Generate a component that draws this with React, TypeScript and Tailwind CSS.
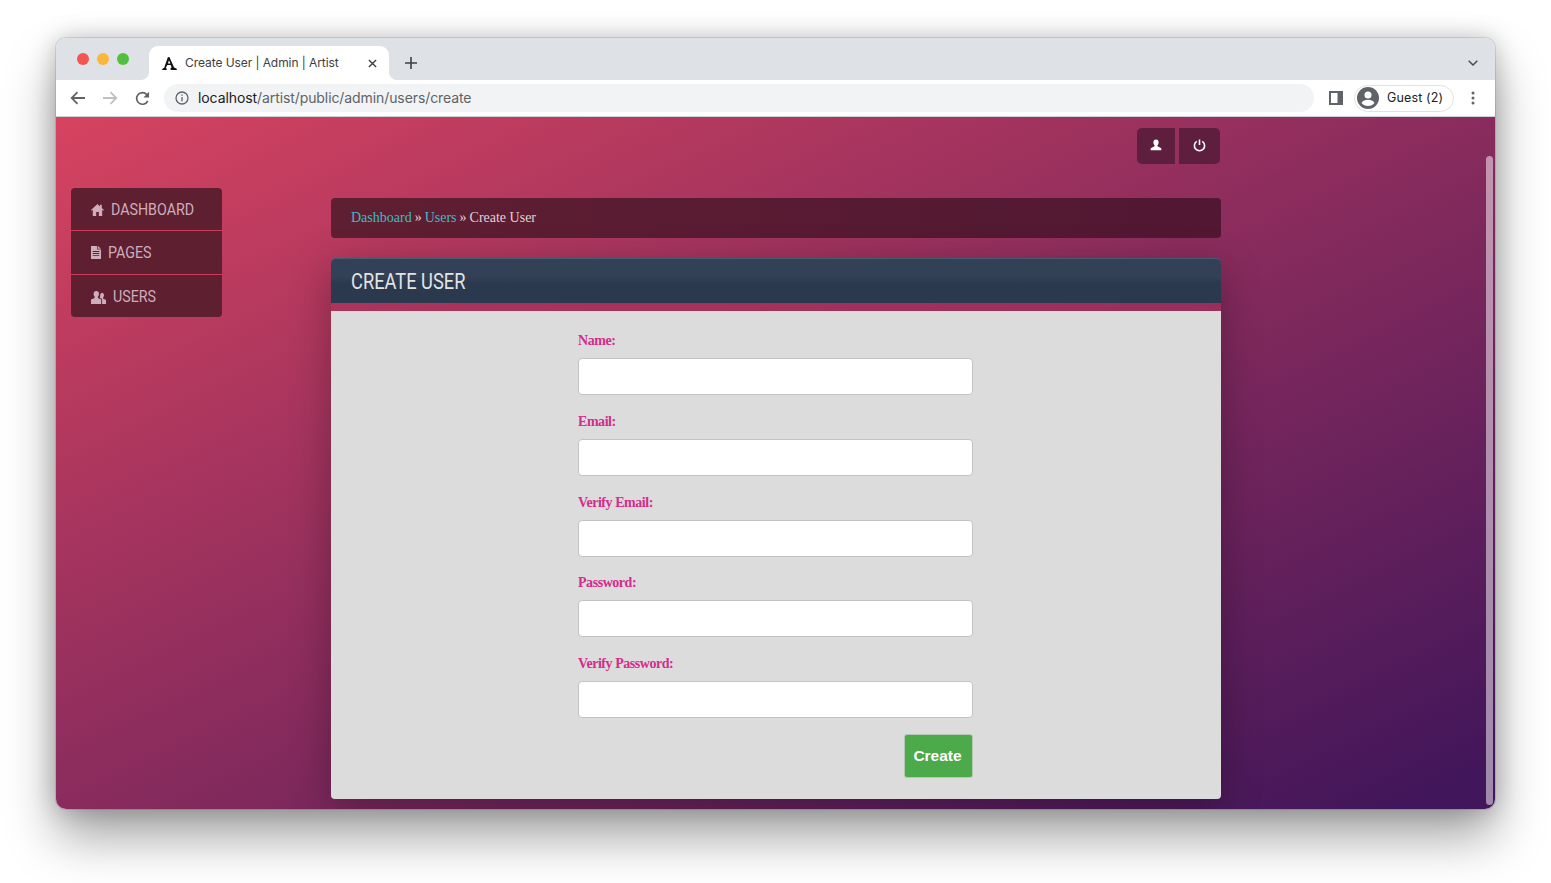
import React from "react";

const Home = ({ c = "" }: { c?: string }) => (
  <svg viewBox="0 0 13 12" className={c} fill="currentColor"><path d="M6.500 0 0 6l.7.8 1.100-1V12h3.400V8h2.600v4h3.400V5.800l1.100 1L13 6l-2.200-2V.7H9V2.400z" /></svg>
);
const FileIcon = ({ c = "" }: { c?: string }) => (
  <svg viewBox="0 0 10 13" className={c} fill="currentColor"><path fillRule="evenodd" d="M0 0h6.200v3.600H10V13H0zM7 .1l2.900 2.700H7zM1.700 5v.9h6.600V5zm0 2.100V8h6.600v-.9zm0 2.100v.9h6.600v-.9z" /></svg>
);
const Users = ({ c = "" }: { c?: string }) => (
  <svg viewBox="0 0 15 13" className={c} fill="currentColor"><path d="M5.300 0c1.700 0 2.700 1.200 2.700 2.900 0 1.100-.4 2.100-1.100 2.800v1.200l3.300 1.700V13H0V8.600l3.600-1.700V5.700C3 5 2.600 4 2.600 2.900 2.600 1.200 3.600 0 5.300 0z" /><path d="M10.700 1.800c1.400 0 2.300 1.100 2.300 2.500 0 1-.4 1.800-1 2.400v.9L15 9v4h-3.900V8l-2.300-1.300c.5-.9.600-2 .4-3.100.3-1 1.300-1.800 2.500-1.800z" /></svg>
);

const navItems = [
  { label: "DASHBOARD", icon: <Home c="w-[13px] h-[12px]" />, cls: "gap-[7px] h-[43px] pt-[2px]" },
  { label: "PAGES", icon: <FileIcon c="w-[10px] h-[13px]" />, cls: "gap-[7px] h-[44px]" },
  { label: "USERS", icon: <Users c="w-[15px] h-[13px]" />, cls: "gap-[7px] h-[42px] pt-[2px]" },
];

const fields = ["Name:", "Email:", "Verify Email:", "Password:", "Verify Password:"];

function Tab() {
  return (
    <div className="relative mt-[8px] ml-[20px] flex h-[34px] w-[240px] items-center rounded-t-[9px] bg-white pl-[13px] pr-[12px]">
      <span className="absolute bottom-0 left-[-8px] h-[8px] w-[8px] bg-[radial-gradient(circle_at_0_0,#dee1e6_7.5px,#ffffff_8.5px)]" />
      <span className="absolute bottom-0 right-[-8px] h-[8px] w-[8px] bg-[radial-gradient(circle_at_100%_0,#dee1e6_7.5px,#ffffff_8.5px)]" />
      <svg viewBox="0 0 15 13" className="mt-[1px] h-[13px] w-[15px]" fill="#111"><path d="M5.800.3 7.400 0l4.700 10.400 2.700 1.300V13H8.900l-.5-1.800 1.200-.7-.9-2.500H5.300l-1.500 2.800.9 1V13H.2v-1.100l2-1.100z" /><path d="M5.900 6.600h2.500L7 3.300z" fill="#fff" /></svg>
      <span className="ml-[8px] flex-1 text-[12px] tracking-[-0.07px] text-[#3c4043]">Create User | Admin | Artist</span>
      <svg viewBox="0 0 10 10" className="h-[9px] w-[9px] text-[#3c4043]" stroke="currentColor" strokeWidth="1.5"><path d="M1 1l8 8M9 1l-8 8" /></svg>
    </div>
  );
}

export default function App() {
  return (
    <div className="h-[883px] w-[1551px] overflow-hidden bg-white pl-[56px] pt-[38px] font-['Inter',sans-serif]">
      <div className="flex h-[771px] w-[1439px] flex-col overflow-hidden rounded-[10px] shadow-[0_28px_50px_rgba(0,0,0,0.36),0_0_24px_rgba(0,0,0,0.22),0_0_0_1px_rgba(0,0,0,0.1)]">
        {/* Tab strip */}
        <div className="flex h-[42px] shrink-0 items-start bg-[#dee1e6]">
          <div className="mt-[15px] ml-[21px] flex gap-[8px]">
            <span className="h-[12px] w-[12px] rounded-full bg-[#f25650]" />
            <span className="h-[12px] w-[12px] rounded-full bg-[#fbb63c]" />
            <span className="h-[12px] w-[12px] rounded-full bg-[#52c03f]" />
          </div>
          <Tab />
          <svg viewBox="0 0 12 12" className="ml-[16px] mt-[19px] h-[12px] w-[12px] text-[#3c4043]" stroke="currentColor" strokeWidth="1.6"><path d="M6 0v12M0 6h12" /></svg>
          <svg viewBox="0 0 10 6" className="ml-auto mr-[17px] mt-[22px] h-[6px] w-[10px] text-[#4a4d51]" fill="none" stroke="currentColor" strokeWidth="1.5"><path d="M.7.8 5 5l4.300-4.200" /></svg>
        </div>
        {/* Toolbar */}
        <div className="flex h-[37px] shrink-0 items-center border-b border-[#d0d2d5] bg-white">
          <svg viewBox="0 0 16 14" className="ml-[14px] h-[14px] w-[16px] text-[#5f6368]" fill="none" stroke="currentColor" strokeWidth="1.8"><path d="M15 7H2M7.500 1.200 1.700 7l5.800 5.800" /></svg>
          <svg viewBox="0 0 16 14" className="ml-[16px] h-[14px] w-[16px] text-[#bdc1c6]" fill="none" stroke="currentColor" strokeWidth="1.8"><path d="M1 7h13M8.500 1.200 14.300 7l-5.800 5.800" /></svg>
          <svg viewBox="0 0 16 16" className="ml-[17px] h-[15px] w-[15px] text-[#5f6368]" fill="none" stroke="currentColor" strokeWidth="1.8"><path d="M13.600 10.500A6.200 6.200 0 1 1 12.400 3.600L14.500 5.700" /><path d="M15 .8v6h-6z" fill="currentColor" stroke="none" /></svg>
          <div className="ml-[14px] flex h-[28px] w-[1150px] items-center rounded-full bg-[#f1f3f4] pl-[11px]">
            <svg viewBox="0 0 14 14" className="h-[14px] w-[14px] text-[#5f6368]" fill="none" stroke="currentColor" strokeWidth="1.300"><circle cx="7" cy="7" r="6" /><path d="M7 6v4.200M7 3.400v1.300" /></svg>
            <span className="ml-[9px] pb-[1px] text-[14px] tracking-[-0.09px] text-[#5f6368]"><span className="text-[#202124]">localhost</span>/artist/public/admin/users/create</span>
          </div>
          <svg viewBox="0 0 14 14" className="ml-[15px] h-[14px] w-[14px]"><path fillRule="evenodd" fill="#5f6368" d="M0 0h14v14H0zM2 2v10h6.500V2z" /></svg>
          <div className="ml-[11px] flex h-[27px] w-[100px] items-center rounded-full border border-[#dfe1e5] pl-[2px]">
            <svg viewBox="0 0 22 22" className="h-[22px] w-[22px]"><circle cx="11" cy="11" r="11" fill="#5f6368" /><circle cx="11" cy="8" r="3.500" fill="#fff" /><path d="M4.500 16c1-2.500 3.800-3.300 6.500-3.300s5.500.8 6.500 3.300c-1.500 2-4 3-6.500 3s-5-1-6.500-3z" fill="#fff" /></svg>
            <span className="ml-[8px] text-[12.5px] tracking-[0.15px] text-[#202124]">Guest (2)</span>
          </div>
          <svg viewBox="0 0 4 14" className="ml-[17px] h-[14px] w-[4px]" fill="#5f6368"><circle cx="2" cy="2" r="1.500" /><circle cx="2" cy="7" r="1.500" /><circle cx="2" cy="12" r="1.500" /></svg>
        </div>
        {/* Page */}
        <div className="relative min-h-0 flex-1 overflow-hidden bg-[linear-gradient(to_bottom_right,#d64360,#41165a_97%)] pl-[15px]">
          <div className="absolute bottom-[4px] right-[2px] top-[39px] w-[7px] rounded-full bg-white/50" />
          <div className="ml-[1066px] mt-[11px] flex w-[83px] gap-[4px] text-white">
            <div className="flex h-[36px] w-[38px] items-center justify-center rounded-l-[5px] bg-[#5e1f3e] pb-[2px]">
              <svg viewBox="0 0 12 12" className="h-[12px] w-[12px]" fill="currentColor"><path d="M6 .5c1.700 0 2.600 1.200 2.600 2.900 0 1.100-.5 2.100-1.100 2.700v1.100l3.800 2v2H.7v-2l3.800-2V6.100c-.6-.6-1.100-1.600-1.100-2.700C3.400 1.700 4.300.5 6 .5z" /></svg>
            </div>
            <div className="flex h-[36px] w-[41px] items-center justify-center rounded-r-[5px] bg-[#5e1f3e] pb-[2px]">
              <svg viewBox="0 0 14 14" className="h-[13px] w-[13px]" fill="none" stroke="currentColor" strokeWidth="1.700"><path d="M4 2.600a5.500 5.500 0 1 0 6 0M7 .5v6" /></svg>
            </div>
          </div>
          <div className="flex items-start">
            <nav className="mt-[24px] w-[151px] shrink-0 overflow-hidden rounded-[4px] bg-[#5e1f30] font-['Roboto',sans-serif] text-[16px] text-[#cfaebb]">
              {navItems.map((n, i) => (
                <div key={n.label} className={`flex items-center pl-[20px] ${n.cls} ${i < 2 ? "border-b border-[#c93c5c]" : ""}`}>
                  {n.icon}
                  <span className="origin-left scale-x-[0.89]">{n.label}</span>
                </div>
              ))}
            </nav>
            <main className="ml-[109px] mt-[34px] w-[890px]">
              <div className="flex h-[40px] items-center rounded-[4px] bg-[linear-gradient(to_right,#5f1f32,#511733)] pb-[1px] pl-[20px] font-['Liberation_Serif',serif] text-[14px] text-[#e0d3d6]">
                <span className="text-[#40bcc4]">Dashboard</span>
                <span className="mx-[3px]">»</span>
                <span className="text-[#40bcc4]">Users</span>
                <span className="mx-[3px]">»</span>
                <span>Create User</span>
              </div>
              <section className="mt-[20px] rounded-[4px] shadow-[0_10px_40px_rgba(0,0,0,0.28)]">
                <h1 className="flex h-[45px] items-center rounded-t-[5px] border-t border-[#465a70] bg-[linear-gradient(to_bottom,#334156_0%,#334156_40%,#2a394d_55%,#2a394d_100%)] pl-[20px] font-['Roboto',sans-serif] text-[22px] font-normal text-[#e3e3e3]">
                  <span className="origin-left scale-x-[0.83]">CREATE USER</span>
                </h1>
                <div className="h-[8px] bg-[#a8325b]/60" />
                <form className="rounded-b-[4px] bg-[#dcdcdc] pl-[247px] pr-[248px] pt-[20px] pb-[21px]">
                  {fields.map((f) => (
                    <div key={f} className="mb-[16.75px]">
                      <label className="block h-[27px] font-['Liberation_Serif',serif] text-[14px] font-bold leading-[19px] tracking-[-0.45px] text-[#d42c8c]">{f}</label>
                      <input className="block h-[37px] w-full rounded-[4px] border border-[#c3c3c3] bg-white" />
                    </div>
                  ))}
                  <div className="-mt-[1px] flex justify-end">
                    <button type="button" className="h-[44px] w-[69px] rounded-[3px] border border-[#b5c7b5] bg-[#4caa4a] pb-[1px] pr-[2px] font-['Liberation_Sans',sans-serif] text-[15.5px] font-bold text-white">Create</button>
                  </div>
                </form>
              </section>
            </main>
          </div>
        </div>
      </div>
    </div>
  );
}
